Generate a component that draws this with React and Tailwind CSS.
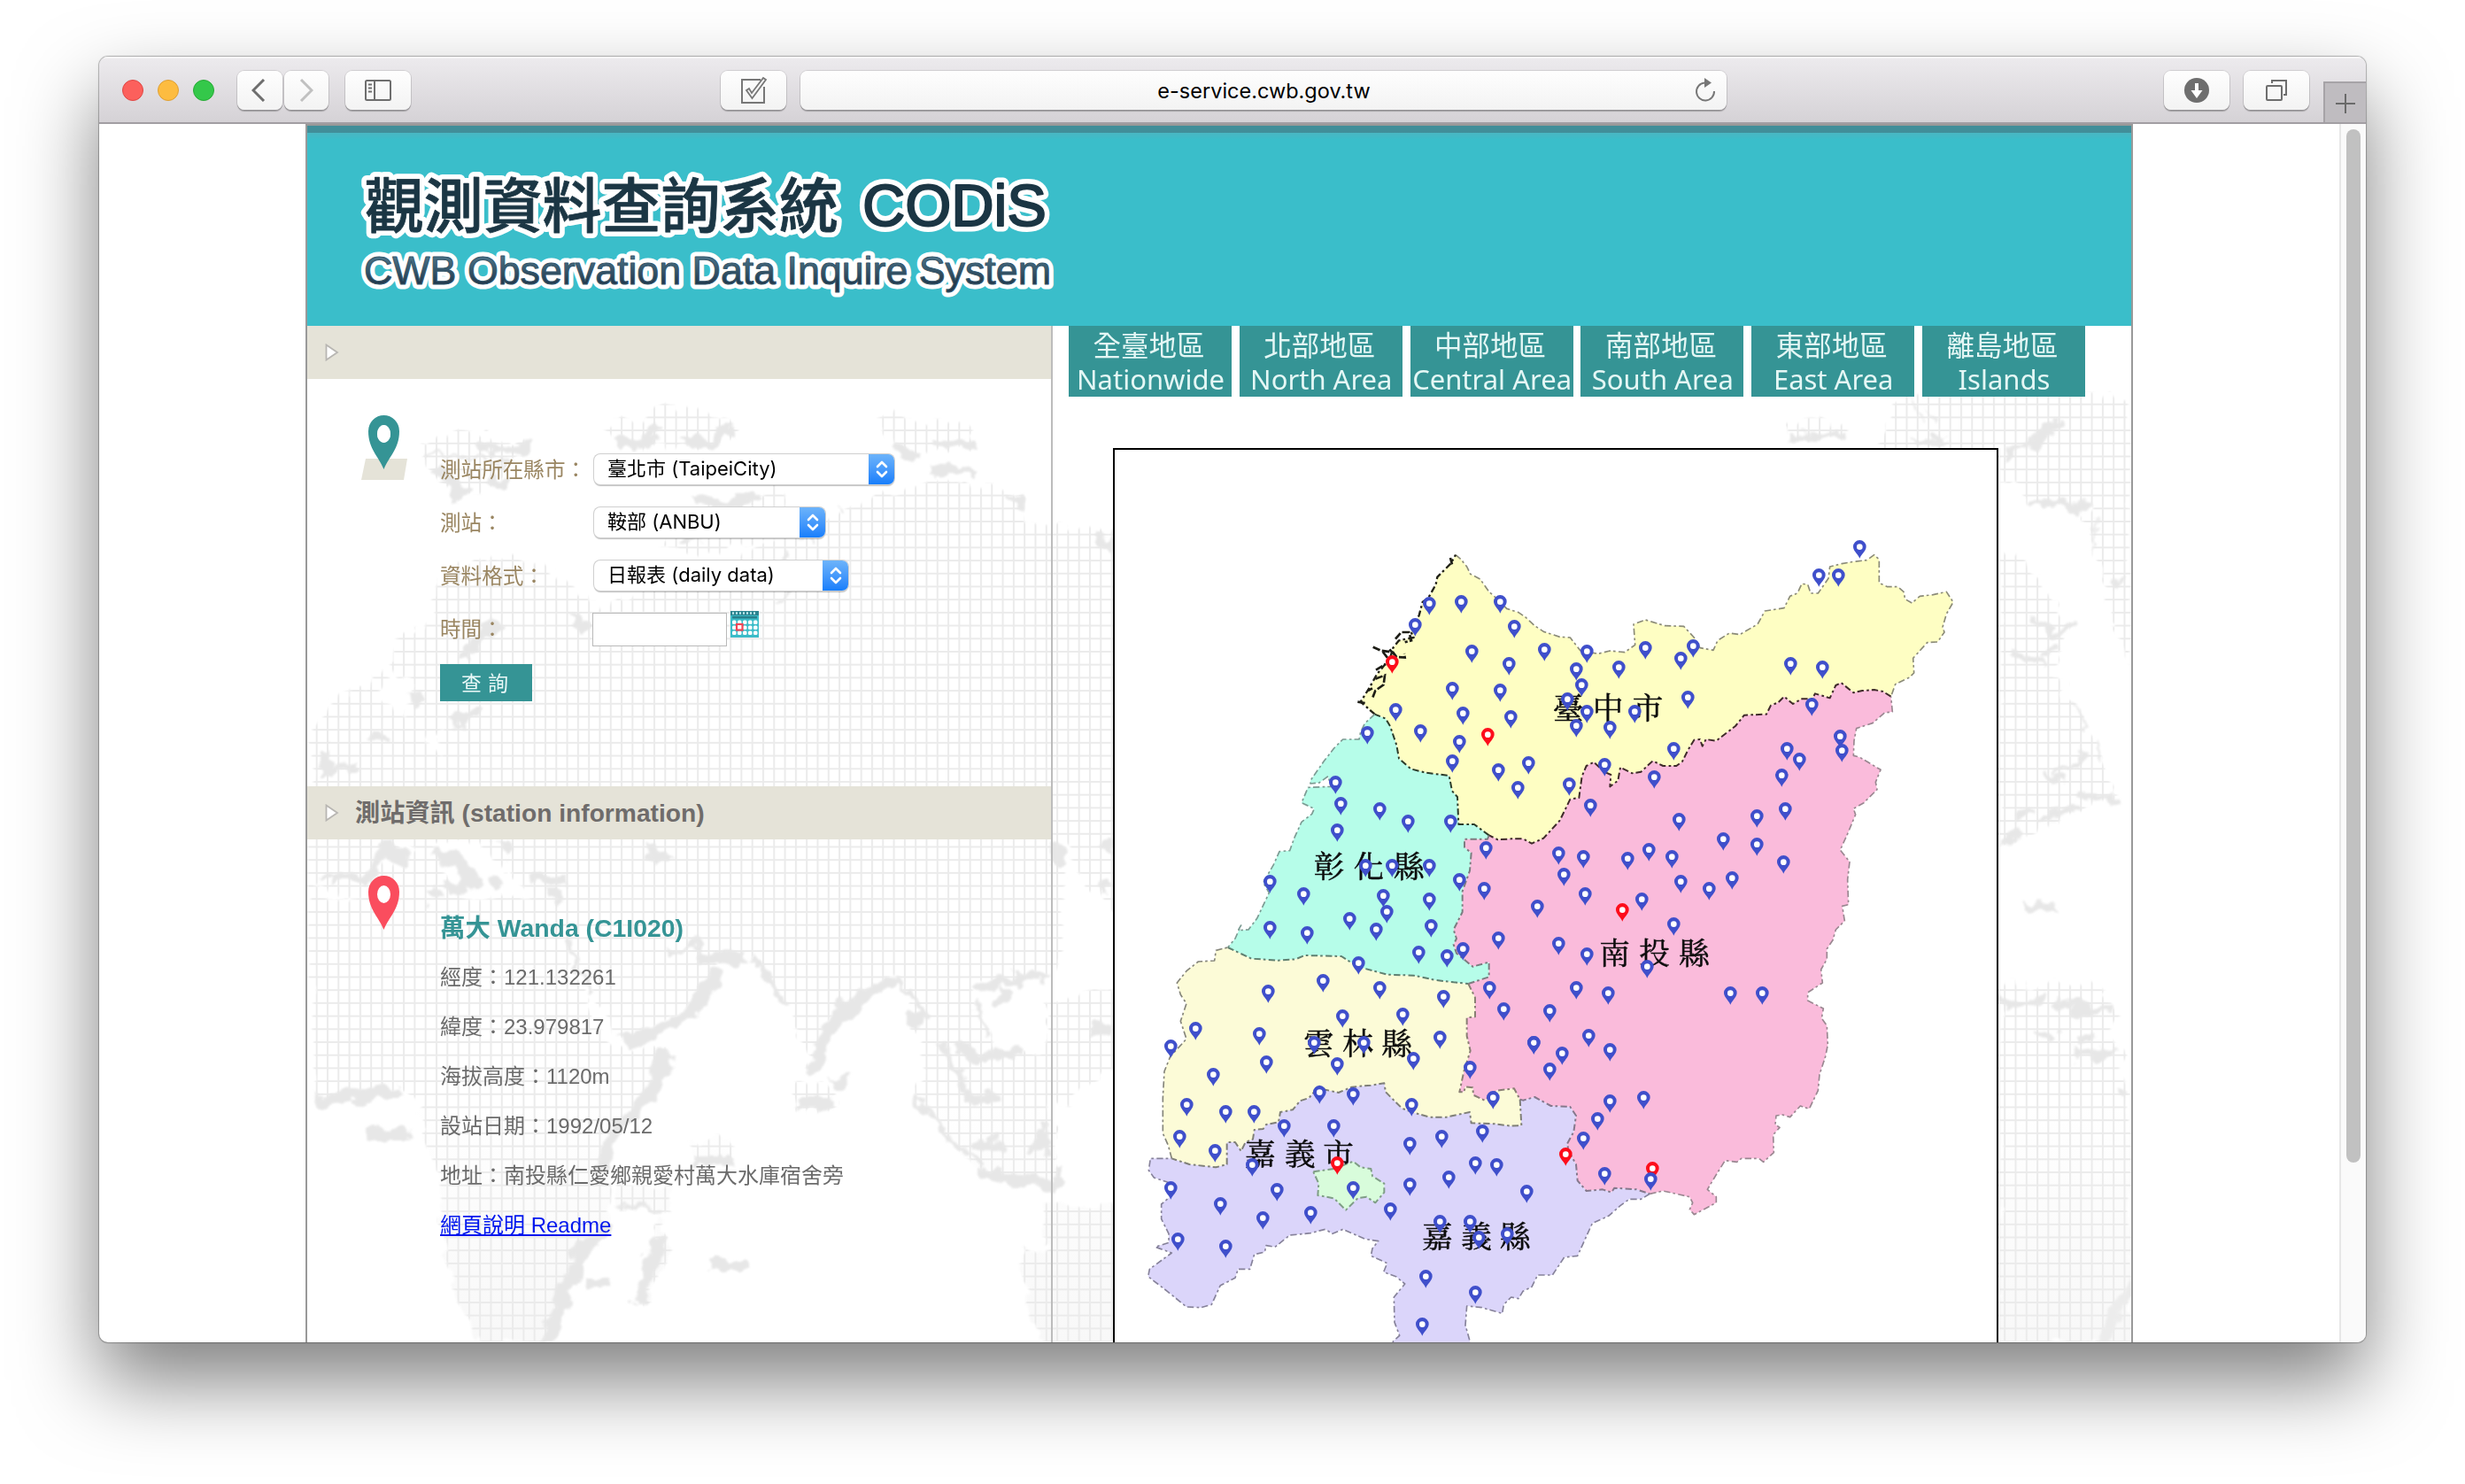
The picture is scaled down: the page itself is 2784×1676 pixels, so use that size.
import React from "react";

/* ---------- geometry helpers ---------- */
const shift = (str, dx = 0, dy = 0) =>
  str.trim().split(/\s+/).map((p) => {
    const [x, y] = p.split(",").map(Number);
    return [x + dx, y + dy];
  });
const join = (...parts) => parts.flat().map((p) => p.join(",")).join(" ");
const rev = (a) => [...a].reverse();

/* ---------- county outlines ---------- */
const E = 1440;
const S = 1440;
const taichungNorth = [
  ...shift("1212,140 1230,155 1250,180 1262,205 1295,222 1325,265 1365,300 1385,322 1425,335"),
  ...shift("10,352 40,380 70,400 125,418 160,420 195,465 255,475 295,465 345,470 380,445 375,375 415,360 480,380 545,382 580,420 600,455 645,463 660,430 700,405 735,410 795,375 820,330 885,320 905,280 930,270 945,238 965,240 975,270 1000,270 1035,220 1040,180 1080,170 1120,163 1165,158 1190,140 1207,155 1207,235 1235,248 1270,248 1290,265 1295,290 1318,303 1345,280 1390,275 1435,265 1458,300 1435,340 1422,385 1428,402 1405,435 1370,437 1322,490 1325,540 1310,555 1262,578 1247,620", E),
];
const taichungNantou = [
  ...shift("1247,620 1220,603 1190,597 1150,600 1120,607 1078,573 1060,582 1040,625 990,610 980,628 945,628 915,645 885,620 865,640 840,650 825,680 750,683 720,720 655,770 620,765 608,788 600,765 580,767 560,800 540,840 520,855 475,855 440,838 400,875 370,880 330,860 322,905 295,925 298,885 275,875 240,842 215,855 200,890 190,963 160,968 125,1040 70,1100 30,1118 0,1102", E),
  ...shift("1400,1102 1355,1105 1325,1090"),
];
const taichungChanghua = shift("1325,1090 1275,1053 1222,1053 1218,960 1200,940 1190,888 1110,878 1060,865 1020,830 1012,785 990,720 975,695 938,680");
const taichungCoast = shift("938,680 910,655 890,638 920,590 945,545 990,490 1000,455 1020,430 1070,420 1060,400 1088,345 1100,300 1120,285 1145,240 1150,215 1195,170 1212,140");
const changhuaCoast = [
  ...shift("938,680 905,710 890,740 885,765 830,765 800,795 765,840 720,905 720,915 750,912 780,890 790,925 712,928 690,980 733,1000 725,1018 690,1045 665,1100 650,1142 615,1145 595,1190 560,1250 580,1285 540,1370 510,1410 475,1412 485,1395 465,1440 440,1470"),
];
const changhuaYunlin = shift("440,30 520,68 610,74 670,70 700,57 825,60 880,95 980,122 1070,125 1140,140 1205,148 1255,153", 0, S);
const changhuaNantou = [
  ...shift("1255,153 1325,130 1325,80 1270,95 1240,70 1215,50 1205,20", 0, S),
  ...shift("1215,1440 1205,1410 1235,1350 1235,1280 1260,1210 1265,1150 1242,1130 1242,1103 1320,1103 1325,1090"),
];
const yunlinNantou = shift("1255,153 1278,200 1278,265 1250,268 1250,330 1262,380 1240,450 1225,520 1240,520 1245,502 1270,505 1272,530 1310,548 1350,515 1410,508 1430,545", 0, S);
const chiayiNantou = [
  ...shift("1430,545", 0, S),
  ...shift("0,548 40,537 95,567 160,570 180,600 172,655 150,695 155,720 180,765 185,820 215,855 270,850 300,860 310,845 385,850 430,865", E, S),
];
const nantouEast = [
  ...shift("430,865 475,855 565,875 575,895 565,918 580,935 655,895 655,875 625,850 655,800 685,752 725,757 740,745 800,745 815,757 850,725 848,665 870,640 855,630 858,600 880,597 905,605 940,567 970,577 1000,515 1005,460 1025,400 1033,360 1030,295 1012,270 1018,237 965,210 965,183 1015,150 1010,105 1030,70 1030,35 1050,5", E, S),
  ...shift("1060,1410 1090,1380 1082,1330 1103,1325 1100,1240 1107,1180 1075,1140 1100,1085 1127,1020 1120,1000 1155,980 1200,935 1195,910 1212,868 1140,825 1120,820 1122,770 1130,728 1185,710 1225,675 1252,672 1247,620", E),
];
const yunlinChiayi = shift("1430,545 1435,633 1400,635 1345,628 1265,625 1260,588 1180,605 1125,605 1070,590 1030,575 975,520 970,490 925,497 860,503 815,522 770,512 750,500 715,540 685,550 660,580 618,588 612,622 570,630 560,645 530,648 525,680 500,690 485,720 465,690 437,690 437,765 400,775 310,765 250,745", 0, S);
const yunlinCoast = shift("250,745 238,700 220,660 220,540 225,450 245,400 300,340 290,310 280,280 300,220 280,190 268,150 300,110 340,78 395,75 400,40 440,30", 0, S);
const chiayiSouth = [
  ...shift("430,865 400,883 360,883 330,905 290,940 235,965 210,1020 185,1075 140,1080 100,1140 50,1140 30,1180 0,1195", E, S),
  ...shift("1425,1220 1400,1215 1375,1240 1370,1270 1300,1250 1250,1245 1245,1310 1262,1370 1262,1410 1000,1410 1000,1365 1022,1345 1005,1300 1003,1215 1040,1170 1010,1145 968,1130 980,1100 925,1075 930,1050 950,1025 905,1018 830,985 795,1000 770,985 720,998 650,1005 600,1045 570,1040 565,1062 530,1070 515,1120 475,1120 465,1150 415,1175 385,1240 350,1250 300,1248 235,1195 170,1145 175,1120 250,1065 195,1045 240,1030 240,1000 215,950 215,900 250,870 235,825 190,810 172,785 178,745 250,745", 0, S),
];
const chiayiCity = shift("730,790 800,780 865,755 890,775 925,780 930,805 970,830 970,860 940,895 910,875 880,880 840,920 800,880 745,870 748,830", 0, S);

const regions = [
  ["#fefec3", join(taichungNorth, taichungNantou, taichungChanghua, taichungCoast)],
  ["#b6fde9", join(changhuaCoast, changhuaYunlin, changhuaNantou, taichungChanghua)],
  ["#fabbdb", join(taichungNantou, rev(changhuaNantou), yunlinNantou, chiayiNantou, nantouEast)],
  ["#fcfbd7", join(changhuaYunlin, yunlinNantou, yunlinChiayi, yunlinCoast)],
  ["#dbd5fa", join(rev(yunlinChiayi), chiayiNantou, chiayiSouth)],
  ["#d8fcdb", join(chiayiCity)],
];
const lines = [
  ["#8b8b78", 5, join(taichungNorth)],
  ["#3f2a2a", 6, join(taichungNantou)],
  ["#2c3c2a", 6, join(taichungChanghua)],
  ["#222218", 7, join(taichungCoast)],
  ["#7c9b93", 5, join(changhuaCoast)],
  ["#5f7f70", 6, join(changhuaYunlin)],
  ["#7c7c80", 6, join(changhuaNantou)],
  ["#8a7f74", 6, join(yunlinNantou)],
  ["#85788c", 6, join(chiayiNantou)],
  ["#9a8791", 5, join(nantouEast)],
  ["#7f7f78", 6, join(yunlinChiayi)],
  ["#85857a", 5, join(yunlinCoast)],
  ["#86829a", 5, join(chiayiSouth)],
  ["#7f9d86", 6, join([...chiayiCity, chiayiCity[0]])],
];

/* ---------- stations (x, y = centre of the pin's hole) ---------- */
const stations = [
  ...shift("1123,305 1231,299 1363,299 1075,377 1411,383 1267,467 1393,509 1201,593 1363,599 1009,665 1237,677 1399,689 913,743 1093,737 1225,773 1201,839 1459,845 1357,869 1423,929 805,911 823,983 955,1001 1051,1043 1195,1043 811,1073 1315,1133 907,1193 997,1193 1123,1193 583,1247 1225,1241 1309,1271 697,1289 967,1295 1123,1307 979,1349 853,1373 1489,1331 583,1403 1129,1397 943,1409 709,1421 1357,1439 1237,1475"),
  ...shift("1141,113 1003,209 1069,209 73,461 217,467 415,455 577,449 535,491 181,527 325,521 907,509 1015,521 199,581 151,629 559,623 217,671 379,671 979,647 181,719 295,725 1075,755 511,797 895,797 1081,803 937,833 277,851 877,887 445,893 157,917 229,989 889,1001 793,1025 529,1037 679,1103 793,1121 121,1151 205,1163 427,1139 355,1169 505,1163 139,1223 883,1181 535,1247 709,1235 631,1271 211,1289 403,1307 511,1391", E),
  ...shift("1087,47 1183,59 883,83 763,143 955,167 1327,167 577,179 1171,197 1375,239 1033,257 829,263 331,305 547,323 733,353 901,353 1159,335 247,365 1477,353 1069,407 571,419 811,425 391,461 1261,437 751,521 865,527 301,563 1063,563 1339,539 433,587 529,587 631,635 799,635 277,671 397,719 523,767 1057,695 1165,671 1303,653 1279,761 1351,767 1189,809 247,845 607,851 865,845 1057,833 1453,857 415,899 559,947 721,929 991,917 1159,959 1261,959 1291,1013 1387,1001 271,1019 433,1043 1111,1145 1279,1199 1099,1307", 0, S),
  ...shift("121,17 217,53 421,95 181,167 289,185 703,185 811,185 91,245 223,329 37,353 295,377 133,389 91,443 295,551 409,539 253,611 205,677 277,797", E, S),
];
const redStations = [...shift("997,503 1321,749"), ...shift("337,1343", E), ...shift("811,761", 0, S), ...shift("145,731 439,779", E, S)];
const lastStation = shift("433,815", E, S);

const labels = [
  ["臺中市", "1593 1728 1863", 696],
  ["彰化縣", "783 918 1053", 1232],
  ["南投縣", "1751 1886 2020", 1526],
  ["雲林縣", "748 881 1013", 1834],
  ["嘉義市", "550 685 815", 2208],
  ["嘉義縣", "1150 1283 1413", 2486],
];

function Pin({ x, y, color }) {
  return (
    <path
      transform={`translate(${x} ${y + 2})`}
      fill={color}
      fillRule="evenodd"
      d="M0 37C-6 22-22 12-22-3A22 22 0 0 1 22-3C22 12 6 22 0 37ZM0-12A10 10 0 1 0 0 8A10 10 0 1 0 0-12Z"
    />
  );
}

function RegionMap() {
  return (
    <svg className="block h-[1008px] w-[996px]" viewBox="57 -216 2988 3024">
      {regions.map(([fill, p]) => <polygon key={fill} points={p} fill={fill} />)}
      {lines.map(([c, w, p], i) => (
        <polyline key={i} points={p} fill="none" stroke={c} strokeWidth={w} strokeDasharray="22 9 8 10" strokeLinejoin="round" />
      ))}
      <path d="M932 452L958 464L1000 470L1012 486L1040 488L1038 474M965 468L990 500M1008 425L1028 402L1054 402L1062 430L1040 436M942 530L975 510M940 560L972 548L968 580L940 600L930 626M915 600L930 592M880 638L905 642M988 460L1005 478M1194 150L1200 172" fill="none" stroke="#1d1d16" strokeWidth="8" strokeDasharray="26 7" />
      <g fill="#0d0d0d" stroke="#0d0d0d" strokeWidth="1.500" fontSize="104" textAnchor="middle" fontFamily="'Noto Serif CJK TC','Noto Sans CJK TC',serif">
        {labels.map(([t, x, y]) => <text key={t} x={x} y={y}>{t}</text>)}
      </g>
      {stations.map(([x, y], i) => <circle key={`h${i}`} cx={x} cy={y} r="12" fill="#fff" />)}
      {redStations.map(([x, y], i) => <circle key={`r${i}`} cx={x} cy={y} r="12" fill="#fff" />)}
      {stations.map(([x, y], i) => <Pin key={i} x={x} y={y} color="#3f4fcb" />)}
      {redStations.map(([x, y], i) => <Pin key={i} x={x} y={y} color="#fd0d1b" />)}
      {lastStation.map(([x, y]) => (
        <g key="last">
          <circle cx={x} cy={y} r="12" fill="#fff" />
          <Pin x={x} y={y} color="#3f4fcb" />
        </g>
      ))}
    </svg>
  );
}

/* ---------- faint world map behind the page ---------- */
const T1 = "translate(340 400) scale(.5486 .3571)";
const T2 = "translate(340 940) scale(.5486 .4082)";
const T3 = "translate(2200 440) scale(.3571 .7845)";
function WorldBackdrop() {
  return (
    <svg className="absolute left-0 top-[286px] h-[1088px] w-[2060px]" viewBox="347 428 2060 1088">
      <defs>
        <pattern id="grid" width="12.3" height="14.7" patternUnits="userSpaceOnUse">
          <path d="M0 1H12.3M1 0V14.7" stroke="#ebebeb" strokeWidth="2" fill="none" />
        </pattern>
        <linearGradient id="fade" x1="0" y1="0" x2="0" y2="1">
          <stop offset="0" stopColor="#fff" />
          <stop offset=".75" stopColor="#fff" />
          <stop offset="1" stopColor="#f8f8f8" />
        </linearGradient>
        <filter id="coast" x="347" y="428" width="2060" height="1088" filterUnits="userSpaceOnUse">
          <feTurbulence type="fractalNoise" baseFrequency="0.045" numOctaves="3" seed="7" />
          <feDisplacementMap in="SourceGraphic" scale="26" xChannelSelector="R" yChannelSelector="G" />
          <feGaussianBlur stdDeviation="1.1" />
        </filter>
        <mask id="land" x="347" y="428" width="2060" height="1088" maskUnits="userSpaceOnUse">
          <g filter="url(#coast)" fill="#fff">
            <path transform={T1} d="M240 280L330 240L470 290L430 340L400 400L330 460L270 390ZM620 240L720 180L800 160L860 200L910 240L860 290L700 300ZM1180 195L1250 195L1380 240L1390 290L1250 320L1200 260Z" />
            <path transform={T1} d="M290 700L380 635L480 655L560 720L600 800L660 790L700 740L860 700L940 600L1000 560L1100 500L1190 440L1330 400L1480 440L1490 520L1568 560V1568H10L25 1180L60 1090L180 1000L200 900L270 840Z" />
            <path transform={T1} d="M740 600L830 480L960 430L1010 450L1000 560L830 640Z" />
            <path transform={T2} d="M10 0H1568V330L1540 390L1400 400L1380 460L1440 600L1550 620V980L1480 960L1380 920L1320 820L1270 720L1280 600L1240 420L1210 390L1080 520L1050 650L1000 480L930 350L850 360L840 440L660 590L620 480L550 300L560 400L640 600L760 600L740 700L620 860L640 1030L630 1110L570 1180L500 1410H360L290 1150V960L250 850V760L200 700L30 740Z" />
            <path transform={T2} d="M690 1300L740 1050L760 1160L720 1300ZM1490 1150H1680V1410H1520L1480 1200ZM640 980H760V1040H660ZM800 850H890V920H810ZM1010 700H1100V770H1020Z" />
            <path transform={T3} d="M-210 60L-150 15L-60 5L300 -10L580 15V395L540 360L470 230L430 170L260 165L160 110L0 90H-200ZM-520 48H-320V72H-500Z" />
            <path transform={T3} d="M160 235L250 245L300 290L390 340L330 400L440 490L530 580L400 610L160 660ZM160 855H460L530 900L560 1000L580 1040V1372H160Z" />
            <path d="M1180 590L1265 600V1030L1230 1000L1180 900ZM1180 1130L1265 1120V1200L1180 1260ZM1180 1360H1265V1530H1180Z" />
            <path transform={T1} fill="#000" d="M640 700L700 720L640 800L600 790ZM60 900L180 880L160 980L90 1040ZM190 1000L240 1030L210 1150L160 1090ZM260 1210L300 1190L280 1290Z" />
            <path transform={T2} fill="#000" d="M270 30L300 130L350 180L400 190L470 180L420 90L380 50L330 20ZM20 130L60 160L130 190L40 180ZM215 20L240 60L180 100L150 90Z" />
          </g>
        </mask>
      </defs>
      <g mask="url(#land)">
        <rect x="347" y="428" width="2060" height="1088" fill="url(#fade)" />
        <rect x="347" y="428" width="2060" height="1088" fill="url(#grid)" />
      </g>
      <g filter="url(#coast)">
        <g fill="none" stroke="#e7e7e7" strokeLinejoin="round">
          <g transform={T1} strokeWidth="26">
            <path d="M275 360L310 400L325 455M340 420L330 455M390 385L420 410M645 285L690 275L720 250L730 220M780 285L820 270L850 285L860 250L900 240M740 275L700 290M810 475L870 470L950 440M800 600L820 570M340 965L365 900L405 850M1220 300L1270 330M1310 390L1340 350L1390 370M1310 280L1390 278M1470 450L1475 500M560 830L590 870M215 1090L250 1080L230 1110M300 1170L360 1130M140 1200L185 1210M40 1240L60 1290L40 1325L120 1310M360 300L470 300" />
            <path d="M1000 620L990 700L1010 740L970 790M1020 590L1050 590M1100 480L1110 500M250 310L440 350" strokeWidth="8" />
          </g>
          <g transform={T2} strokeWidth="30">
            <path d="M850 390L820 475L750 540L665 590M748 605L728 710L645 830L622 920M625 1080L570 1180L540 1290L505 1420M30 745L120 730L205 712M820 350L920 348M1215 405L1110 500L1070 580L1060 655M738 1120L715 1220L695 1295M810 912H895M1025 750H1095M840 1200H915M580 1250H635M1095 690L1125 685M1400 440L1440 400L1530 405M1440 470L1450 430M1350 590L1400 620L1475 610M1390 870L1440 865M1490 870L1535 850M1390 940L1480 960L1560 975M60 125L130 125L150 100L180 40L210 80M270 50L330 90L350 140L300 160M400 120L410 165M430 60L415 20M475 130H550M500 175L540 175M720 30L740 80M130 835L225 835M270 150L280 190M1260 490L1265 530M1370 730L1440 740" />
            <path d="M760 330L800 310L830 340M1220 400L1290 520M1320 580L1370 720M1270 730L1340 860L1400 920M930 350L1000 480M545 290L570 360L600 450M1530 800V900M1390 470L1410 560M660 1030L740 1040M60 110H40" strokeWidth="11" />
          </g>
          <g transform={T3} strokeWidth="10">
            <path d="M-110 70H-10M-500 68L-330 66M165 100L250 78L300 75M265 75L360 45M260 165L340 162L435 170M270 330L345 350L400 335M200 380L260 390L305 398M300 385L340 375M310 550L370 565M350 550L435 525M465 510L475 540M420 580L480 585L535 590M195 620L275 605M290 620L410 600M160 655L230 640M240 745H345M160 880L250 885L305 872M340 885H460M400 893H525M275 930H345M400 935H465M380 950L420 960L530 955M530 1010H550" />
            <path d="M-110 20L-90 50M-70 30L-40 50M470 190V230M520 280H560M380 450L440 490" strokeWidth="5" />
            <path d="M590 1280L470 1385" strokeWidth="26" stroke="#ececec" />
          </g>
          <path d="M1240 605L1256 620M1245 950L1258 960M1240 1000H1256M1236 1160H1258M1192 950L1200 980M1190 1320L1196 1340" strokeWidth="13" />
        </g>
      </g>
    </svg>
  );
}

/* ---------- browser chrome ---------- */
const chromeBtn = "flex h-[44px] items-center justify-center rounded-[8px] bg-gradient-to-b from-[#fefefe] to-[#f3f3f3] shadow-[0_0_0_1px_rgba(0,0,0,0.10),0_2px_1px_rgba(0,0,0,0.25)]";

function Toolbar() {
  return (
    <div className="flex h-[76px] shrink-0 border-b-2 border-[#a29ea3] bg-gradient-to-b from-[#edebee] to-[#d5d2d6] shadow-[inset_0_2px_0_#f6f5f6]">
      <div className="flex w-full items-start pt-[16px] pl-[26px]">
        <div className="mt-[10px] flex gap-[16px]">
          <i className="h-[24px] w-[24px] rounded-full border border-[#df4744] bg-[#fc605c]" />
          <i className="h-[24px] w-[24px] rounded-full border border-[#de9f34] bg-[#fdbc40]" />
          <i className="h-[24px] w-[24px] rounded-full border border-[#27aa35] bg-[#34c84a]" />
        </div>
        <div className={`ml-[26px] w-[51px] pr-[4px] ${chromeBtn}`}>
          <svg width="16" height="26" viewBox="0 0 16 26" fill="none" stroke="#6e6e6e" strokeWidth="3"><path d="M14 1L2 13L14 25" /></svg>
        </div>
        <div className={`ml-[2px] w-[50px] ${chromeBtn}`}>
          <svg width="16" height="26" viewBox="0 0 16 26" fill="none" stroke="#c0c0c0" strokeWidth="3"><path d="M2 1L14 13L2 25" /></svg>
        </div>
        <div className={`ml-[19px] w-[74px] ${chromeBtn}`}>
          <svg width="30" height="24" viewBox="0 0 30 24" fill="none" stroke="#6e6e6e" strokeWidth="2"><rect x="1" y="1" width="28" height="22" rx="1.5" /><path d="M11 1V23M4 5.500H8M4 9.500H8M4 13.500H8" /></svg>
        </div>
        <div className={`ml-[350px] w-[74px] ${chromeBtn}`}>
          <svg width="32" height="32" viewBox="0 0 32 32" fill="none" stroke="#777" strokeWidth="2"><path d="M24 4H3V30H28V12" /><path d="M8 16L11 14L14 19L27 2L30 4L14.500 25Z" fill="#f6f6f6" strokeWidth="1.800" /></svg>
        </div>
        <div className={`relative ml-[16px] w-[1046px] pt-[1px] ${chromeBtn}`}>
          <span className="whitespace-nowrap pl-[1px] font-['Inter','Roboto',sans-serif] text-[23.500px] text-black">e-service.cwb.gov.tw</span>
          <svg className="absolute right-[12px] top-[8px]" width="24" height="28" viewBox="0 0 24 28" fill="none" stroke="#777" strokeWidth="2"><path d="M11 5.500A10 10 0 1 0 22 15" /><path d="M11 0L19 5.500L11 11Z" fill="#777" stroke="none" /></svg>
        </div>
        <div className={`ml-[494px] w-[74px] ${chromeBtn}`}>
          <svg width="28" height="28" viewBox="0 0 28 28"><circle cx="14" cy="14" r="14" fill="#6e6e6e" /><path d="M12 6H16V14H20.500L14 23L7.500 14H12Z" fill="#fff" /></svg>
        </div>
        <div className={`ml-[16px] w-[74px] ${chromeBtn}`}>
          <svg width="24" height="24" viewBox="0 0 24 24" fill="none" stroke="#6e6e6e" strokeWidth="2"><rect x="1" y="7" width="17" height="16" rx="1" /><path d="M7 4V1H23V17H20" /></svg>
        </div>
        <div className="ml-auto mt-[12px] flex h-[46px] w-[48px] items-center justify-center border-l-2 border-t-2 border-[#a6a3a7] bg-[#bfbcc0] pt-[2px]">
          <svg width="22" height="22" viewBox="0 0 22 22" stroke="#6a6a6a" strokeWidth="2"><path d="M11 0V22M0 11H22" /></svg>
        </div>
      </div>
    </div>
  );
}

/* ---------- page parts ---------- */
function Logo() {
  return (
    <svg className="block overflow-visible" width="800" height="170" viewBox="0 0 800 170">
      <defs>
        <linearGradient id="ink" x1="0" y1="0" x2="0" y2="1">
          <stop offset="0.2" stopColor="#4b7388" />
          <stop offset="0.8" stopColor="#21384b" />
        </linearGradient>
      </defs>
      {["halo", "ink"].map((layer) => {
        const halo = layer === "halo";
        return (
          <g key={layer} strokeLinejoin="round" aria-hidden={halo}>
            <g fill={halo ? "#fff" : "#1b3644"} stroke={halo ? "#fff" : "#1b3644"}>
              <text x="2" y="81" fontSize="67" fontWeight="500" strokeWidth={halo ? 12 : 0.8} textLength="535" fontFamily="'Noto Sans CJK TC',sans-serif">觀測資料查詢系統</text>
              <text x="564" y="79" fontSize="67" strokeWidth={halo ? 13 : 2} textLength="208" fontFamily="'Liberation Sans',sans-serif">CODiS</text>
            </g>
            <text x="1" y="145" fontSize="44.800" strokeWidth={halo ? 11 : 1} textLength="776" fontFamily="'Liberation Sans',sans-serif" fill={halo ? "#fff" : "url(#ink)"} stroke={halo ? "#fff" : "#34566a"}>CWB Observation Data Inquire System</text>
          </g>
        );
      })}
    </svg>
  );
}

function SectionBar({ children }) {
  return (
    <div className="relative flex h-[60px] items-center bg-[#e5e3d8] pl-[20px]">
      <svg width="16" height="20" viewBox="0 0 16 20"><path d="M1.500 1.500L14 10L1.500 18.500Z" fill="#fff" stroke="#b8b6b2" strokeWidth="1.800" /></svg>
      <span className="ml-[18px] whitespace-nowrap pt-[1px] font-['Liberation_Sans','Noto_Sans_CJK_TC',sans-serif] text-[28.200px] font-bold text-[#6f6c6b]">{children}</span>
    </div>
  );
}

function Select({ w, children }) {
  return (
    <div className={`flex h-[34px] items-stretch overflow-hidden rounded-[7px] bg-white shadow-[0_0_0_1px_#cfcfcf,0_2px_1px_rgba(0,0,0,0.25)] ${w}`}>
      <span className="flex-1 whitespace-nowrap pl-[15px] font-['Inter','Noto_Sans_CJK_TC',sans-serif] text-[22px] leading-[33px] text-black">{children}</span>
      <span className="flex w-[29px] items-center justify-center bg-gradient-to-b from-[#6cb3fa] to-[#157efb]">
        <svg width="14" height="20" viewBox="0 0 14 20" fill="none" stroke="#fff" strokeWidth="2.600" strokeLinecap="round" strokeLinejoin="round"><path d="M2 7L7 2L12 7M2 13L7 18L12 13" /></svg>
      </span>
    </div>
  );
}

function Row({ label, children }) {
  return (
    <div className="flex h-[60px] items-center">
      <div className="w-[174px] shrink-0 whitespace-nowrap pb-[1px] font-['Noto_Sans_CJK_TC',sans-serif] text-[23.600px] text-[#9a8662]">{label}</div>
      {children}
    </div>
  );
}

const areas = [
  ["全臺地區", "Nationwide"],
  ["北部地區", "North Area"],
  ["中部地區", "Central Area"],
  ["南部地區", "South Area"],
  ["東部地區", "East Area"],
  ["離島地區", "Islands"],
];

const info = ["經度：121.132261", "緯度：23.979817", "海拔高度：1120m", "設站日期：1992/05/12", "地址：南投縣仁愛鄉親愛村萬大水庫宿舍旁"];

function Page() {
  return (
    <div className="relative h-full w-[2064px] overflow-hidden border-2 border-b-0 border-[#999]">
      <WorldBackdrop />
      <div className="relative">
        <header className="h-[226px] border-t-8 border-[#418e99] bg-[#3abeca] bg-[linear-gradient(#4ab6c2_0px,#3abeca_8px)] pl-[63px] pt-[26px]">
          <Logo />
        </header>
        <div className="flex">
          <section className="h-[1148px] w-[842px] shrink-0 border-r-2 border-[#bcbcbc]">
            <SectionBar />
            <div className="flex h-[460px]">
              <svg className="ml-[61px] mt-[41px]" width="52" height="74" viewBox="0 0 52 74">
                <path d="M5 49H52L48 73H0Z" fill="#e5e3d8" />
                <path fillRule="evenodd" fill="#359495" d="M25.500 61C20 47 8 38 8 18A17.500 18 0 0 1 43 18C43 38 31 47 25.500 61ZM25.500 11A7.500 10 0 1 0 25.500 31A7.500 10 0 1 0 25.500 11Z" />
                <ellipse cx="25.500" cy="21" rx="7.500" ry="10" fill="#fff" />
              </svg>
              <div className="ml-[37px] mt-[72px]">
                <Row label="測站所在縣市："><Select w="w-[339px]">臺北市 (TaipeiCity)</Select></Row>
                <Row label="測站："><Select w="w-[261px]">鞍部 (ANBU)</Select></Row>
                <Row label="資料格式："><Select w="w-[287px]">日報表 (daily data)</Select></Row>
                <Row label="時間：">
                  <div className="-ml-[2px] mt-[2px] h-[38px] w-[152px] border border-[#b9b9b9] bg-white" />
                  <svg className="-mt-[10px] ml-[4px]" width="32" height="30" viewBox="0 0 32 30">
                    <rect width="32" height="30" fill="#3bbcc8" />
                    <rect width="32" height="5" fill="#2b8490" />
                    <path d="M2 2.500H30" stroke="#bfe8ec" strokeWidth="2.500" strokeDasharray="2 2" />
                    <rect x="2" y="6" width="28" height="2.500" fill="#277f8a" />
                    {[10.5, 16.5, 22.5].map((y) => [2, 8, 14, 20, 26].map((x) => <rect key={`${x}-${y}`} x={x} y={y} width="4.500" height="4.500" rx="1.500" fill="#fff" />))}
                    <rect x="7" y="15" width="6.500" height="6.500" fill="#fff" stroke="#f34455" strokeWidth="2.200" />
                  </svg>
                </Row>
                <button className="mt-[10px] flex h-[42px] w-[104px] items-center justify-center gap-[7px] bg-[#359495] pb-[1px] pr-[3px] font-['Noto_Sans_CJK_TC',sans-serif] text-[23px] text-[#e9f8f7]">
                  <span>查</span><span>詢</span>
                </button>
              </div>
            </div>
            <SectionBar>測站資訊 (station information)</SectionBar>
            <div className="flex">
              <svg className="ml-[69px] mt-[41px]" width="35" height="62" viewBox="0 0 35 62">
                <ellipse cx="17.500" cy="21" rx="7.500" ry="10" fill="#fff" />
                <path fillRule="evenodd" fill="#fa4d5e" d="M17.500 61C12 47 0 38 0 18A17.500 18 0 0 1 35 18C35 38 23 47 17.500 61ZM17.500 11A7.500 10 0 1 0 17.500 31A7.500 10 0 1 0 17.500 11Z" />
              </svg>
              <div className="ml-[46px] mt-[72px] font-['Liberation_Sans','Noto_Sans_CJK_TC',sans-serif] text-[24px] text-[#6b6b6b]">
                <h2 className="h-[56px] whitespace-nowrap text-[28.400px] font-bold leading-[57px] text-[#359495]">萬大 Wanda (C1I020)</h2>
                {info.map((t) => <p key={t} className="h-[56px] whitespace-nowrap leading-[56px]">{t}</p>)}
                <p className="h-[56px] leading-[56px]"><a className="whitespace-nowrap text-[#0016ee] underline decoration-2 underline-offset-2">網頁說明 Readme</a></p>
              </div>
            </div>
          </section>
          <section className="flex-1">
            <nav className="ml-[18px] flex h-[80px] gap-[8.800px]">
              {areas.map(([zh, en]) => (
                <div key={en} className="flex w-[184px] shrink-0 flex-col items-center bg-[#359495] pt-[1px] text-[#e4f7f5]">
                  <span className="whitespace-nowrap pr-[3px] font-['Noto_Sans_CJK_TC',sans-serif] text-[31.500px] leading-[39px]">{zh}</span>
                  <span className="whitespace-nowrap pl-[1px] font-['Noto_Sans','Open_Sans',sans-serif] text-[31px] leading-[41px]">{en}</span>
                </div>
              ))}
            </nav>
            <div className="ml-[68px] mt-[58px] h-[1010px] w-[1000px] border-2 border-b-0 border-black bg-white">
              <RegionMap />
            </div>
          </section>
        </div>
      </div>
    </div>
  );
}

export default function App() {
  return (
    <div className="h-[1676px] w-[2784px] overflow-hidden bg-white pl-[112px] pt-[64px]">
      <div className="flex h-[1452px] w-[2560px] flex-col overflow-hidden rounded-[10px] bg-white shadow-[0_0_1px_1px_rgba(0,0,0,0.28),0_44px_90px_rgba(0,0,0,0.5)]">
        <Toolbar />
        <div className="flex min-h-0 flex-1">
          <div className="flex flex-1 justify-center overflow-hidden"><Page /></div>
          <div className="flex w-[30px] shrink-0 justify-center border-l-2 border-[#e7e7e7] bg-[#fafafa] pt-[6px]">
            <div className="h-[1167px] w-[16px] rounded-full bg-[#c1c1c1]" />
          </div>
        </div>
      </div>
    </div>
  );
}
